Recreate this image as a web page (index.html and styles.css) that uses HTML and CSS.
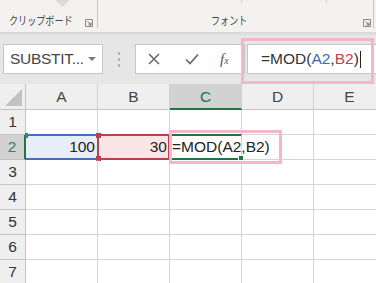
FILE: index.html
```html
<!DOCTYPE html>
<html lang="ja">
<head>
<meta charset="utf-8">
<link rel="stylesheet" href="styles.css">
</head>
<body>
<div class="app">
  <div class="ribbon">
    <div class="group clip">
      <span class="paste-rem"></span>
      <span class="glabel">クリップボード</span>
      <svg class="launch" width="8" height="8" viewBox="0 0 8 8"><path d="M0.5 7.5V0.5h7v7z" fill="none" stroke="#8a8a8a"/><path d="M2.5 2.5l3.5 3.5M6 3.5v2.5H3.5" fill="none" stroke="#666"/></svg>
    </div>
    <div class="group font">
      <span class="tick t1"></span><span class="tick t2"></span>
      <span class="glabel">フォント</span>
      <svg class="launch" width="8" height="8" viewBox="0 0 8 8"><path d="M0.5 7.5V0.5h7v7z" fill="none" stroke="#8a8a8a"/><path d="M2.5 2.5l3.5 3.5M6 3.5v2.5H3.5" fill="none" stroke="#666"/></svg>
    </div>
  </div>
  <div class="shadow"></div>
  <div class="fbar">
    <div class="namebox">
      <span class="nbtext">SUBSTIT...</span>
      <svg width="8" height="5" viewBox="0 0 8 5"><path d="M0 0h8L4 4z" fill="#7a7a7a"/></svg>
    </div>
    <div class="dots"><i></i><i></i><i></i></div>
    <div class="btns">
      <svg class="b-x" width="12" height="12" viewBox="0 0 12 12"><path d="M1 1l10 10M11 1L1 11" stroke="#666" stroke-width="1.5"/></svg>
      <svg class="b-ok" width="14" height="12" viewBox="0 0 14 12"><path d="M1 6.5l4 4L13 1.5" fill="none" stroke="#666" stroke-width="1.6"/></svg>
      <span class="b-fx"><i>f</i><small>x</small></span>
    </div>
    <div class="input">
      <span class="ftext">=MOD(<span class="ra">A2</span>,<span class="rb">B2</span>)</span><span class="caret"></span>
    </div>
    <div class="hl hl-bar"></div>
  </div>
  <div class="sheet">
    <div class="grid">
      <div class="h corner"><span class="tri"></span></div>
      <div class="h col">A</div>
      <div class="h col">B</div>
      <div class="h col sel">C</div>
      <div class="h col">D</div>
      <div class="h col">E</div>

      <div class="h row">1</div>
      <div class="c"></div><div class="c"></div><div class="c"></div><div class="c"></div><div class="c"></div>

      <div class="h row sel">2</div>
      <div class="c num ca">100<span class="sq sq-tl-blue"></span></div>
      <div class="c num cb">30<span class="sq sq-tl-red"></span><span class="sq sq-bl-red"></span></div>
      <div class="c cc"><span class="ctext">=MOD(A2,B2)</span><span class="sq sq-br-green"></span></div>
      <div class="c"></div><div class="c"></div>

      <div class="h row">3</div>
      <div class="c"></div><div class="c"></div><div class="c"></div><div class="c"></div><div class="c"></div>
      <div class="h row">4</div>
      <div class="c"></div><div class="c"></div><div class="c"></div><div class="c"></div><div class="c"></div>
      <div class="h row">5</div>
      <div class="c"></div><div class="c"></div><div class="c"></div><div class="c"></div><div class="c"></div>
      <div class="h row">6</div>
      <div class="c"></div><div class="c"></div><div class="c"></div><div class="c"></div><div class="c"></div>
      <div class="h row">7</div>
      <div class="c"></div><div class="c"></div><div class="c"></div><div class="c"></div><div class="c"></div>
    </div>
    <div class="hl hl-cell"></div>
  </div>
</div>
</body>
</html>
```

FILE: styles.css
```css
* { box-sizing: border-box; }
html, body { margin: 0; padding: 0; }
body {
  width: 376px;
  height: 283px;
  overflow: hidden;
  background: #fff;
  font-family: "Liberation Sans", Arial, "Noto Sans CJK JP", sans-serif;
}
.app { width: 376px; height: 283px; overflow: hidden; }

/* ribbon */
.ribbon {
  height: 32px;
  background: #f3f2f1;
  display: flex;
}
.group {
  position: relative;
  flex-shrink: 0;
  height: 28px;
  display: flex;
  align-items: flex-end;
  border-right: 1px solid #c8c6c4;
}
.clip { width: 98px; padding-left: 9px; }
.font { width: 276px; padding-left: 113px; }
.glabel {
  font-family: "Noto Sans CJK JP", sans-serif;
  font-size: 11.5px;
  line-height: 14px;
  color: #444;
  margin-bottom: 1px;
  white-space: nowrap;
  display: inline-block;
  transform: scaleX(0.79);
  transform-origin: left center;
}
.launch { position: absolute; right: 4px; bottom: 1px; }
.font .launch { right: 2px; }
.paste-rem {
  position: absolute;
  left: 57px; top: -6px;
  width: 11px; height: 11px;
  background: #dadada;
  transform: rotate(45deg);
  border-radius: 2px;
}
.tick { position: absolute; top: 0; width: 1px; height: 3px; background: #d0d0d0; }
.t1 { left: 143px; }
.t2 { left: 228px; }

.shadow {
  height: 4px;
  background: linear-gradient(#d8d8d8, #e6e6e6);
}

/* formula bar */
.fbar {
  position: relative;
  height: 48px;
  background: #e6e6e6;
  display: flex;
  align-items: flex-start;
  padding: 8px 0 0 3px;
}
.fbar > * { flex-shrink: 0; }
.namebox {
  width: 100px;
  height: 30px;
  background: #fff;
  border: 1px solid #c6c6c6;
  display: flex;
  align-items: center;
  justify-content: space-between;
  padding: 0 6px 0 6px;
}
.nbtext { font-size: 15.5px; color: #444; letter-spacing: -0.3px; }
.namebox svg { margin-top: 1px; }
.dots {
  width: 32px;
  height: 30px;
  display: flex;
  flex-direction: column;
  align-items: center;
  justify-content: center;
  gap: 3px;
}
.dots i { width: 2px; height: 3px; background: #b4b4b4; display: block; }
.btns {
  width: 110px;
  height: 30px;
  background: #fff;
  border: 1px solid #c6c6c6;
  display: flex;
  align-items: center;
  padding-left: 12px;
}
.b-x { margin-right: 25px; }
.b-ok { margin-right: 21px; }
.b-fx {
  font-family: "Liberation Serif", serif;
  font-size: 15px;
  color: #555;
}
.b-fx small { font-size: 10px; font-style: italic; }
.input {
  width: 140px;
  margin-left: 2px;
  height: 30px;
  background: #fff;
  border: 1px solid #c6c6c6;
  display: flex;
  align-items: center;
  padding-left: 13px;
}
.ftext { font-size: 15.5px; color: #333; }
.ra { color: #3e6bb7; }
.rb { color: #b8434c; }
.caret { width: 1px; height: 17px; background: #222; margin-left: 1px; }

.hl {
  position: absolute;
  border: 3px solid #f5b5cb;
  pointer-events: none;
}
.hl-bar { left: 241px; top: 2px; width: 133px; height: 46px; }

/* sheet */
.sheet { position: relative; }
.grid {
  display: grid;
  grid-template-columns: 26px 72px 72px 72px 72px 72px;
  grid-template-rows: 26px repeat(7, 25px);
}
.h {
  background: #efefef;
  border-right: 1px solid #cfcfcf;
  border-bottom: 1px solid #c4c4c4;
  color: #444;
  font-size: 15.5px;
  display: flex;
  align-items: center;
  justify-content: center;
}
.corner { position: relative; border-right-color: #c4c4c4; }
.tri {
  position: absolute;
  right: 3px; bottom: 3px;
  width: 0; height: 0;
  border-left: 17px solid transparent;
  border-bottom: 17px solid #c2c2c2;
}
.col { padding-top: 1px; }
.col.sel {
  background: #d2d2d2;
  color: #217346;
  border-bottom: 2px solid #217346;
}
.row { border-right-color: #c4c4c4; color: #333; }
.row.sel {
  background: #d2d2d2;
  color: #3a7d5a;
  border-right: 2px solid #217346;
}
.c {
  position: relative;
  border-right: 1px solid #d4d4d4;
  border-bottom: 1px solid #d4d4d4;
  font-size: 15.5px;
  color: #222;
}
.num {
  display: flex;
  align-items: center;
  justify-content: flex-end;
  padding-right: 2px;
}
.ca {
  background: #e8eef9;
  border-top: 2px solid #4470b4;
  border-bottom: 2px solid #4470b4;
  margin-top: -1px;
}
.cb {
  background: #fbe6e7;
  border: 2px solid #b6434c;
  margin: -1px 0 0 -1px;
  padding-right: 1px;
}
.cc {
  border-top: 2px solid #217346;
  border-bottom: 2px solid #217346;
  margin-top: -1px;
  display: flex;
  align-items: center;
  overflow: visible;
  white-space: nowrap;
  z-index: 1;
}
.ctext { padding-left: 2px; }
.sq { position: absolute; width: 5px; height: 5px; }
.sq-tl-blue { left: -1px; top: -3px; background: #4470b4; width: 3px; }
.sq-tl-red { left: -3px; top: -3px; background: #b6434c; }
.sq-bl-red { left: -3px; bottom: -3px; background: #b6434c; }
.sq-br-green { right: -3px; bottom: -3px; background: #217346; border: 1px solid #fff; width: 6px; height: 6px; }

.hl-cell { left: 169px; top: 46px; width: 113px; height: 34px; z-index: 2; }
```
